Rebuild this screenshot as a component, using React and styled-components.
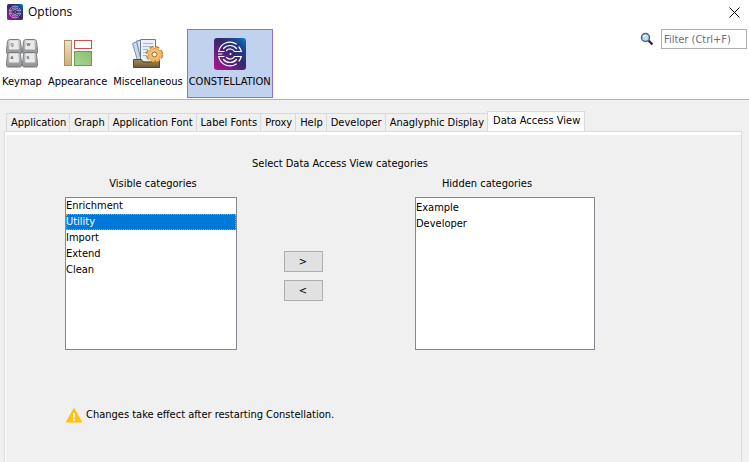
import { useState } from "react";
import styled, { createGlobalStyle } from "styled-components";

const categories = [
  { name: "Keymap", icon: <KeymapIcon /> },
  { name: "Appearance", icon: <AppearanceIcon /> },
  { name: "Miscellaneous", icon: <MiscIcon /> },
  { name: "CONSTELLATION", icon: <Logo size={32} /> },
];

const tabs = [
  "Application",
  "Graph",
  "Application Font",
  "Label Fonts",
  "Proxy",
  "Help",
  "Developer",
  "Anaglyphic Display",
  "Data Access View",
];

export default function App() {
  const [category, setCategory] = useState("CONSTELLATION");
  const [tab, setTab] = useState("Data Access View");

  return (
    <>
      <GlobalStyle />
      <Window>
        <TitleBar>
          <Logo size={16} />
          <Title>Options</Title>
          <CloseButton aria-label="Close">
            <svg width="11" height="11" viewBox="0 0 11 11">
              <path d="M.5.5l10 10M10.5.5l-10 10" stroke="#000" fill="none" />
            </svg>
          </CloseButton>
        </TitleBar>
        <Toolbar>
          <CategoryList>
            {categories.map(({ name, icon }) => (
              <CategoryButton
                key={name}
                $active={name === category}
                onClick={() => setCategory(name)}
              >
                {icon}
                {name}
              </CategoryButton>
            ))}
          </CategoryList>
          <Search>
            <label htmlFor="filter" aria-label="Filter">
              <SearchIcon />
            </label>
            <FilterInput id="filter" placeholder="Filter (Ctrl+F)" />
          </Search>
        </Toolbar>
        <Main>
          <TabList role="tablist">
            {tabs.map((name) => (
              <Tab
                key={name}
                role="tab"
                aria-selected={name === tab}
                $active={name === tab}
                onClick={() => setTab(name)}
              >
                {name}
              </Tab>
            ))}
          </TabList>
          <Panel role="tabpanel">
            <DataAccessOptions />
          </Panel>
        </Main>
      </Window>
    </>
  );
}

function DataAccessOptions() {
  const [visible, setVisible] = useState([
    "Enrichment",
    "Utility",
    "Import",
    "Extend",
    "Clean",
  ]);
  const [hidden, setHidden] = useState(["Example", "Developer"]);
  const [selected, setSelected] = useState("Utility");

  const hide = () => {
    if (!visible.includes(selected)) return;
    setVisible(visible.filter((e) => e !== selected));
    setHidden([...hidden, selected]);
  };

  const show = () => {
    if (!hidden.includes(selected)) return;
    setHidden(hidden.filter((e) => e !== selected));
    setVisible([...visible, selected]);
  };

  return (
    <Options>
      <Heading>Select Data Access View categories</Heading>
      <Columns>
        <CategoryBox
          id="visible"
          title="Visible categories"
          items={visible}
          selected={selected}
          onSelect={setSelected}
        />
        <MoveButtons>
          <MoveButton onClick={hide}>&gt;</MoveButton>
          <MoveButton onClick={show}>&lt;</MoveButton>
        </MoveButtons>
        <CategoryBox
          id="hidden"
          title="Hidden categories"
          items={hidden}
          selected={selected}
          onSelect={setSelected}
          inset
        />
      </Columns>
      <Notice>
        <WarningIcon />
        Changes take effect after restarting Constellation.
      </Notice>
    </Options>
  );
}

function CategoryBox({ id, title, items, selected, onSelect, inset }) {
  return (
    <Box>
      <BoxTitle id={id} $inset={inset}>
        {title}
      </BoxTitle>
      <List role="listbox" aria-labelledby={id} $inset={inset}>
        {items.map((item) => (
          <Item
            key={item}
            role="option"
            aria-selected={item === selected}
            $selected={item === selected}
            onClick={() => onSelect(item)}
          >
            {item}
          </Item>
        ))}
      </List>
    </Box>
  );
}

function Logo({ size }) {
  const id = `logo-${size}`;
  return (
    <svg width={size} height={size} viewBox="0 0 32 32">
      <defs>
        <linearGradient id={id} x1="0" y1="1" x2="1" y2="0">
          <stop offset="0" stopColor="#b5138f" />
          <stop offset=".3" stopColor="#6b2083" />
          <stop offset=".55" stopColor="#36286c" />
          <stop offset=".8" stopColor="#1d4590" />
          <stop offset="1" stopColor="#0086cc" />
        </linearGradient>
      </defs>
      <rect width="32" height="32" rx="3" fill={`url(#${id})`} />
      <g fill="none" stroke="#fff" strokeWidth="1.2" strokeLinecap="round">
        <path d="M22.300 6A11.500 11.500 0 0 0 4.700 13.500H10M25 9A11.500 11.500 0 0 1 27.300 13.500H20.500A5 5 0 0 0 12.500 12.500" />
        <path d="M22.300 26A11.500 11.500 0 0 1 4.700 18.500H10M25 23A11.500 11.500 0 0 0 27.300 18.500H20.500A5 5 0 0 1 12.500 19.500" />
        <path d="M22.500 10.500A8.500 8.500 0 0 0 9.500 10.500M22.500 21.500A8.500 8.500 0 0 1 9.500 21.500" />
        <path d="M4.500 16H8" strokeWidth="1" />
      </g>
      <circle cx="16.500" cy="16" r="1" fill="#fff" />
    </svg>
  );
}

function KeymapIcon() {
  const keys = [
    [0.5, 1.5, "Q"],
    [16.5, 1.5, "W"],
    [0.5, 14.5, "A"],
    [16.5, 14.5, "S"],
  ];
  return (
    <svg width="32" height="32" viewBox="0 0 32 32">
      <defs>
        <linearGradient id="key-side" x1="0" y1="0" x2="0" y2="1">
          <stop offset="0" stopColor="#d2d2d2" />
          <stop offset="1" stopColor="#8c8e90" />
        </linearGradient>
      </defs>
      {keys.map(([x, y, letter]) => (
        <g key={letter} transform={`translate(${x} ${y})`}>
          <path
            d="M3 0H12Q13.500 0 14 2L15 11V13Q15 14.500 13 14.500H2Q0 14.500 0 13V11L1 2Q1.500 0 3 0Z"
            fill="url(#key-side)"
            stroke="#77797b"
          />
          <path
            d="M3.500 1H11.500L12.500 9Q12.500 10 11.500 10H3.500Q2.500 10 2.500 9Z"
            fill="#e9eaec"
          />
          <text
            x="4"
            y="6"
            fontSize="4"
            fontWeight="700"
            fontFamily="Liberation Sans, sans-serif"
            fill="#555"
          >
            {letter}
          </text>
        </g>
      ))}
    </svg>
  );
}

function AppearanceIcon() {
  return (
    <svg width="32" height="32" viewBox="0 0 32 32">
      <defs>
        <linearGradient id="tan" x1="0" y1="0" x2="0" y2="1">
          <stop offset="0" stopColor="#eee2cd" />
          <stop offset="1" stopColor="#cbb07c" />
        </linearGradient>
        <linearGradient id="green" x1="0" y1="1" x2="1" y2="0">
          <stop offset="0" stopColor="#a9d392" />
          <stop offset="1" stopColor="#8cbf70" />
        </linearGradient>
      </defs>
      <rect x="2.500" y="2.500" width="7" height="25" fill="url(#tan)" stroke="#ad905c" />
      <rect x="12.500" y="2.500" width="17" height="8" fill="#fff" stroke="#c4524e" />
      <rect x="12.500" y="13.500" width="17" height="14" fill="url(#green)" stroke="#699e4b" />
    </svg>
  );
}

function MiscIcon() {
  return (
    <svg width="32" height="32" viewBox="0 0 32 32">
      <defs>
        <linearGradient id="tray" x1="0" y1="0" x2="0" y2="1">
          <stop offset="0" stopColor="#a18b60" />
          <stop offset="1" stopColor="#705b33" />
        </linearGradient>
      </defs>
      <path d="M.500 5.500L7 2.500L14 19L6 24Z" fill="#c9d8e6" stroke="#7d93a9" />
      <path d="M4.500 3L15 1.500V22H9Z" fill="#d5e2ee" stroke="#7389a0" />
      <path d="M8.500 1.500H23.500V24H8.500Z" fill="#eaf0f5" stroke="#657c93" />
      <path
        d="M11 5.500H21M11 8.500H19M11 11.500H16M11 14.500H15M11 17.500H15"
        stroke="#a8b5c1"
      />
      <path
        d="M1.500 21.500H9.500L11 24H20L21.500 21.500H27.500V29.500H1.500Z"
        fill="url(#tray)"
        stroke="#57482b"
      />
      <circle
        cx="22.500"
        cy="16.500"
        r="6.500"
        fill="none"
        stroke="#b06c1c"
        strokeWidth="4"
        strokeDasharray="3.400 1.705"
      />
      <circle cx="22.500" cy="16.500" r="6" fill="#f8c070" stroke="#c98636" />
      <circle
        cx="22.500"
        cy="16.500"
        r="6.500"
        fill="none"
        stroke="#f5bd6b"
        strokeWidth="2"
        strokeDasharray="3.400 1.705"
      />
      <circle cx="22.500" cy="16.500" r="2.500" fill="#fff1d6" stroke="#a9661c" />
    </svg>
  );
}

function SearchIcon() {
  return (
    <svg width="14" height="14" viewBox="0 0 14 14">
      <path d="M8.500 8.500L12.500 12.500" stroke="#273038" strokeWidth="2.400" />
      <circle cx="5.500" cy="5.500" r="4" fill="#b9dcf2" stroke="#536270" strokeWidth="1.500" />
      <path d="M3.500 5A2.500 2.500 0 0 1 6 3.200" fill="none" stroke="#fff" />
    </svg>
  );
}

function WarningIcon() {
  return (
    <svg width="18" height="16" viewBox="0 0 18 16">
      <path d="M9 0.500L17.500 15.500H.500Z" fill="#ffc20e" />
      <path d="M9 6V10.500M9 11.800V13.800" stroke="#fff" strokeWidth="2" />
    </svg>
  );
}

const GlobalStyle = createGlobalStyle`
  * {
    box-sizing: border-box;
  }

  body {
    margin: 0;
    background: #f0f0f0;
  }

  body, button, input {
    font-family: "DejaVu Sans Condensed", "DejaVu Sans", sans-serif;
    font-size: 11px;
    line-height: 16px;
    color: #000;
  }

  button {
    padding: 0;
    border: none;
    background: none;
    white-space: nowrap;
  }

  svg {
    display: block;
    flex-shrink: 0;
  }
`;

const Window = styled.div`
  display: flex;
  flex-direction: column;
  min-height: 100vh;
`;

const TitleBar = styled.header`
  display: flex;
  align-items: center;
  height: 24px;
  padding: 0 9px 0 7px;
  background: #fff;
`;

const Title = styled.h1`
  flex: 1;
  margin: 0 0 0 5px;
  font-family: "Open Sans", sans-serif;
  font-size: 12px;
  font-weight: 400;
`;

const CloseButton = styled.button`
  display: flex;
`;

const Toolbar = styled.div`
  display: flex;
  justify-content: space-between;
  align-items: flex-start;
  padding: 5px 2px 1px 0;
  background: #fff;
  border-bottom: 1px solid #b4b4b4;
`;

const CategoryList = styled.nav`
  display: flex;
  gap: 2px;
`;

const CategoryButton = styled.button`
  display: flex;
  flex-direction: column;
  align-items: center;
  gap: 4px;
  height: 69px;
  padding: 8px 1px 0;
  border: 1px solid ${({ $active }) => ($active ? "#9770c8" : "transparent")};
  background: ${({ $active }) => ($active ? "#c1d2ee" : "transparent")};
`;

const Search = styled.div`
  display: flex;
  align-items: center;
  gap: 7px;
`;

const FilterInput = styled.input`
  width: 86px;
  height: 20px;
  padding: 0 2px;
  border: 1px solid #abadb3;
  outline: none;

  &::placeholder {
    color: #6d6d7c;
    opacity: 1;
  }
`;

const Main = styled.main`
  display: flex;
  flex: 1;
  flex-direction: column;
  padding: 11px 7px 0 4px;
`;

const TabList = styled.div`
  display: flex;
  align-items: flex-end;
  height: 20px;
  padding-left: 2px;
`;

const Tab = styled.button`
  height: ${({ $active }) => ($active ? "22px" : "18px")};
  margin-bottom: ${({ $active }) => ($active ? "-2px" : "0")};
  padding: ${({ $active }) => ($active ? "0 4px 3px 5px" : "0 3px 0 4px")};
  border: 1px solid #d9d9d9;
  border-right-width: ${({ $active }) => ($active ? "1px" : "0")};
  border-bottom: none;
  background: ${({ $active }) => ($active ? "#fff" : "#f0f0f0")};
`;

const Panel = styled.section`
  flex: 1;
  padding: 24px 60px 32px;
  border: 1px solid #dcdcdc;
  border-bottom: none;
  box-shadow: inset 0 3px #fff, inset 1px 0 #fff;
`;

const Options = styled.div`
  max-width: 530px;
`;

const Heading = styled.h2`
  margin: 0 0 4px;
  padding-left: 20px;
  font-size: 11px;
  font-weight: 400;
  text-align: center;
`;

const Columns = styled.div`
  display: grid;
  grid-template-columns: 172fr 178fr 180fr;
`;

const Box = styled.div`
  min-width: 0;
`;

const BoxTitle = styled.h3`
  margin: 0 0 5px;
  padding: ${({ $inset }) => ($inset ? "0 36px 0 0" : "0 0 0 4px")};
  font-size: 11px;
  font-weight: 400;
  text-align: center;
`;

const List = styled.ul`
  min-height: 153px;
  margin: 0;
  padding: ${({ $inset }) => ($inset ? "2px 0" : "0")};
  border: 1px solid #828790;
  background: #fff;
  list-style: none;
`;

const Item = styled.li`
  outline: ${({ $selected }) => ($selected ? "1px dotted #ff8728" : "none")};
  outline-offset: -1px;
  background: ${({ $selected }) => ($selected ? "#0078d7" : "transparent")};
  color: ${({ $selected }) => ($selected ? "#fff" : "#000")};
  cursor: default;
`;

const MoveButtons = styled.div`
  display: flex;
  flex-direction: column;
  align-items: center;
  gap: 8px;
  padding: 75px 46px 0 0;
`;

const MoveButton = styled.button`
  width: 39px;
  height: 21px;
  border: 1px solid #adadad;
  background: #e1e1e1;
`;

const Notice = styled.p`
  display: flex;
  align-items: center;
  gap: 3px;
  margin: 57px 0 0;
`;
